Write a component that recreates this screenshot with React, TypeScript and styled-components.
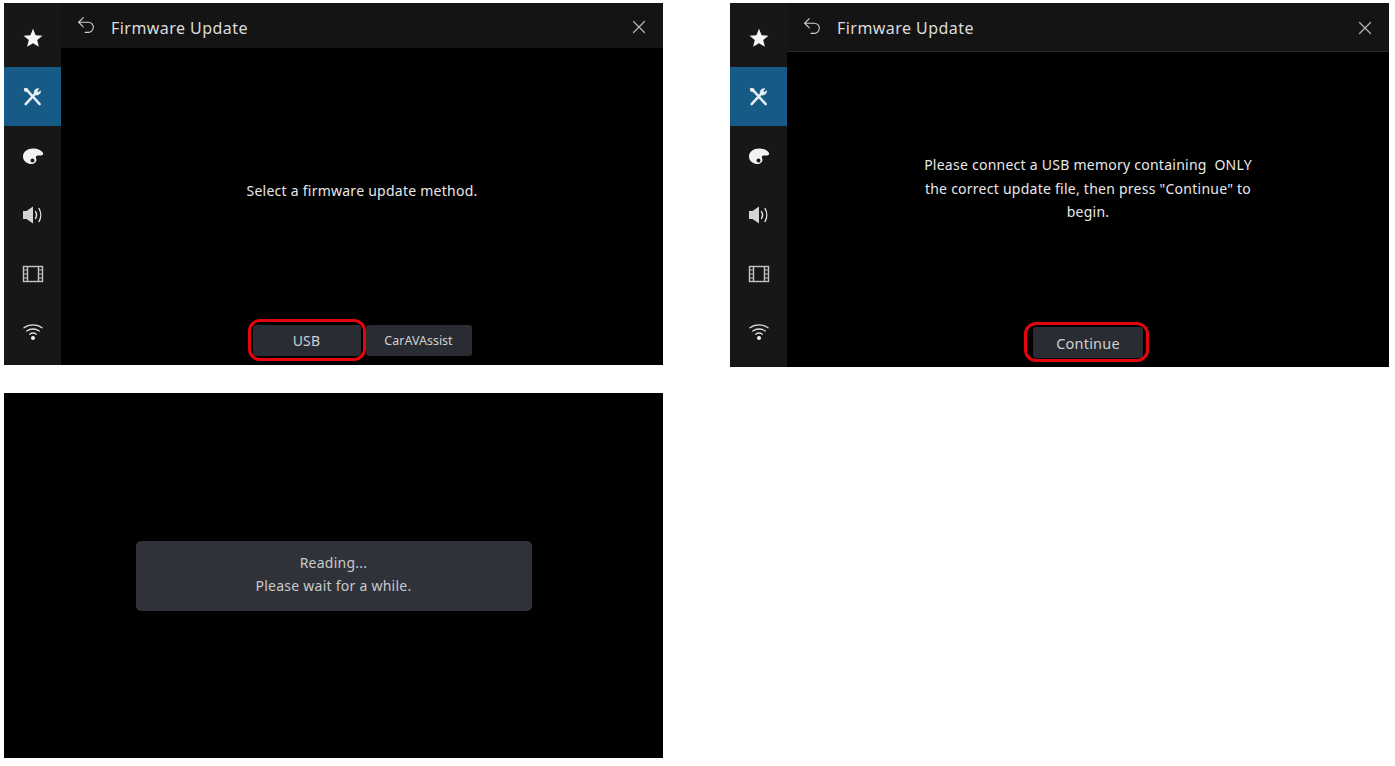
import React from "react";
import styled, { createGlobalStyle } from "styled-components";
import { Undo2, X } from "lucide-react";

const GlobalStyle = createGlobalStyle`
  html, body {
    margin: 0;
    background: #fff;
    font-family: "Noto Sans", "Open Sans", sans-serif;
  }
`;

const StarIcon = () => (
  <svg width="20" height="20" viewBox="0 0 20 20">
    <path fill="#f6f6f6" d="M10 .8l2.600 6.400 6.900.5-5.300 4.400 1.700 6.700L10 15.200l-5.900 3.600 1.700-6.700L.5 7.700l6.900-.5Z" />
  </svg>
);

const ToolsIcon = () => (
  <svg width="21" height="21" viewBox="0 0 22 22" fill="none" stroke="#e6eef3" strokeLinecap="round">
    <path d="M5 4 L18.500 19" strokeWidth="2.600" />
    <path d="M2.800 2.500 L6 3 L6 5.800 L3.400 5.600 Z" fill="#e6eef3" strokeWidth="1" />
    <path d="M3.800 19 L13.500 8.500" strokeWidth="2.600" />
    <path
      d="M12.800 7.400 C12.400 4.400 14.800 2.200 17.600 3 L15.600 5.200 L17 6.900 L19.300 5 C19.800 7.800 17.200 10 14.600 9.300"
      fill="#e6eef3"
      strokeWidth="0.800"
    />
  </svg>
);

const PaletteIcon = () => (
  <svg width="22" height="18" viewBox="0 0 22 18">
    <path
      fill="#f2f2f2"
      fillRule="evenodd"
      d="M1 9.500C1 4.500 5.800 1.500 11 1.500c4.600 0 8.600 1.800 10 4.600.6 1.300-.4 2.300-1.800 2.300h-3.400c-1.600 0-2.200 1.200-1.900 2.400.3 1.200 1 2.200.2 3.600-.9 1.600-3 2.600-5.400 2.600C4.800 16.500 1 14 1 9.500ZM10.500 11.500a2 2 0 1 0 0 4 2 2 0 0 0 0-4Z"
    />
  </svg>
);

const SpeakerIcon = () => (
  <svg width="22" height="20" viewBox="0 0 22 20" fill="none">
    <path d="M1 6h3.500L11 1.500v17L4.500 14H1Z" fill="#d4d4d4" />
    <path d="M13.500 6.500c1.200 2 1.200 5 0 7" stroke="#e8e8e8" strokeWidth="1.400" strokeLinecap="round" />
    <path d="M17 3.500c2.300 3.800 2.300 9.200 0 13" stroke="#e8e8e8" strokeWidth="1.400" strokeLinecap="round" />
  </svg>
);

const FilmIcon = () => (
  <svg width="22" height="18" viewBox="0 0 22 18" fill="none" stroke="#c4c4c4">
    <rect x="1.500" y="1.500" width="19" height="15" strokeWidth="1.400" />
    <path d="M5.500 1.500v15M16.500 1.500v15" strokeWidth="1.400" />
    <path d="M1.500 5h4M1.500 9h4M1.500 13h4M16.500 5h4M16.500 9h4M16.500 13h4" strokeWidth="1" />
  </svg>
);

const WifiIcon = () => (
  <svg width="22" height="20" viewBox="0 0 22 20" fill="none" stroke="#dcdcdc" strokeWidth="1.300" strokeLinecap="round">
    <path d="M2 4.800C6.800.8 15.200.8 20 4.800" />
    <path d="M4.800 8C8.300 5.300 13.700 5.300 17.200 8" />
    <path d="M7.600 11.200C9.600 9.800 12.400 9.800 14.400 11.200" />
    <circle cx="11" cy="15" r="2" fill="#f4f4f4" stroke="none" />
  </svg>
);

const Page = styled.div`
  display: grid;
  grid-template-columns: 659px 659px;
  column-gap: 67px;
  row-gap: 26px;
  align-items: start;
  padding: 3px 0 0 4px;
`;

const Screen = styled.section<{ $height: number }>`
  display: flex;
  height: ${({ $height }) => $height}px;
  background: #000;
  overflow: hidden;
`;

const Sidebar = styled.nav`
  display: flex;
  flex-direction: column;
  flex: none;
  width: 57px;
  background: #171717;
`;

const SideItem = styled.div<{ $active?: boolean; $first?: boolean }>`
  display: flex;
  align-items: center;
  justify-content: center;
  flex: none;
  height: ${({ $first }) => ($first ? 64 : 59)}px;
  padding-top: ${({ $first }) => ($first ? 6 : 0)}px;
  box-sizing: border-box;
  background: ${({ $active }) => ($active ? "#165a86" : "transparent")};
`;

const Main = styled.div`
  display: flex;
  flex-direction: column;
  flex: 1;
  min-width: 0;
`;

const Header = styled.header<{ $lined?: boolean }>`
  display: flex;
  align-items: center;
  flex: none;
  box-sizing: border-box;
  height: ${({ $lined }) => ($lined ? 49 : 45)}px;
  padding: 0 13px 0 14px;
  background: #141414;
  border-bottom: ${({ $lined }) => ($lined ? "1px solid #2a2a2a" : "none")};
`;

const BackIcon = styled(Undo2)<{ $lift: number }>`
  flex: none;
  margin-top: ${({ $lift }) => -$lift}px;
`;

const CloseIcon = styled(X)`
  flex: none;
  margin-top: 2px;
`;

const Title = styled.h1<{ $drop: number }>`
  flex: 1;
  margin: ${({ $drop }) => $drop}px 0 0 14px;
  font-size: 16px;
  font-weight: 400;
  letter-spacing: 0.45px;
  line-height: 22px;
  color: #dcdcdc;
`;

const Body = styled.div<{ $shift: number }>`
  display: flex;
  flex: 1;
  align-items: center;
  justify-content: center;
  margin-top: ${({ $shift }) => $shift}px;
`;

const Message = styled.p`
  margin: 0;
  font-size: 14px;
  line-height: 23.5px;
  letter-spacing: 0.25px;
  text-align: center;
  color: #e8e8e8;
  white-space: pre-wrap;
`;

const Footer = styled.div`
  display: flex;
  justify-content: center;
  flex: none;
  padding-bottom: 9px;
`;

const ActionButton = styled.button<{ $width: number; $ring?: string; $size: number; $spacing: number }>`
  position: relative;
  width: ${({ $width }) => $width}px;
  height: 31px;
  padding: 0;
  border: none;
  border-radius: 3px;
  background: #2a2c34;
  color: #cfd0d2;
  font-family: inherit;
  font-size: ${({ $size }) => $size}px;
  letter-spacing: ${({ $spacing }) => $spacing}px;

  ${({ $ring }) =>
    $ring &&
    `
    &::after {
      content: "";
      position: absolute;
      inset: ${$ring};
      border: 3.5px solid #e5050f;
      border-radius: 12px;
    }
  `}
`;

const ButtonGap = styled.span`
  flex: none;
  width: 5px;
`;

const FullScreen = styled(Screen)`
  align-items: center;
  justify-content: center;
`;

const Dialog = styled.div`
  display: flex;
  align-items: center;
  justify-content: center;
  box-sizing: border-box;
  width: 396px;
  height: 70px;
  padding-bottom: 3px;
  border-radius: 5px;
  background: #2f3239;
`;

const DialogText = styled(Message)`
  color: #c9cacc;
`;

const NAV_ICONS = [
  <StarIcon key="star" />,
  <ToolsIcon key="tools" />,
  <PaletteIcon key="palette" />,
  <SpeakerIcon key="speaker" />,
  <FilmIcon key="film" />,
  <WifiIcon key="wifi" />,
];

const SideNav = () => (
  <Sidebar>
    {NAV_ICONS.map((icon, index) => (
      <SideItem key={index} $first={index === 0} $active={index === 1}>
        {icon}
      </SideItem>
    ))}
  </Sidebar>
);

const TopBar = ({ lined }: { lined?: boolean }) => (
  <Header $lined={lined}>
    <BackIcon $lift={lined ? 3 : 1} size={22} color="#cfcfcf" strokeWidth={1.2} />
    <Title $drop={lined ? 1 : 5}>Firmware Update</Title>
    <CloseIcon size={22} color="#b5b5b5" strokeWidth={1.3} />
  </Header>
);

const App = () => (
  <>
    <GlobalStyle />
    <Page>
      <Screen $height={362}>
        <SideNav />
        <Main>
          <TopBar />
          <Body $shift={9}>
            <Message>Select a firmware update method.</Message>
          </Body>
          <Footer>
            <ActionButton $width={108} $size={14} $spacing={0.2} $ring="-6px -5px -5px -5px">
              USB
            </ActionButton>
            <ButtonGap />
            <ActionButton $width={106} $size={12.5} $spacing={0}>
              CarAVAssist
            </ActionButton>
          </Footer>
        </Main>
      </Screen>
      <Screen $height={364}>
        <SideNav />
        <Main>
          <TopBar lined />
          <Body $shift={-2}>
            <Message>
              {'Please connect a USB memory containing  ONLY\nthe correct update file, then press "Continue" to\nbegin.'}
            </Message>
          </Body>
          <Footer>
            <ActionButton $width={110} $size={14.5} $spacing={0.2} $ring="-5px -6px -4px -9px">
              Continue
            </ActionButton>
          </Footer>
        </Main>
      </Screen>
      <FullScreen $height={365}>
        <Dialog>
          <DialogText>{"Reading...\nPlease wait for a while."}</DialogText>
        </Dialog>
      </FullScreen>
    </Page>
  </>
);

export default App;
